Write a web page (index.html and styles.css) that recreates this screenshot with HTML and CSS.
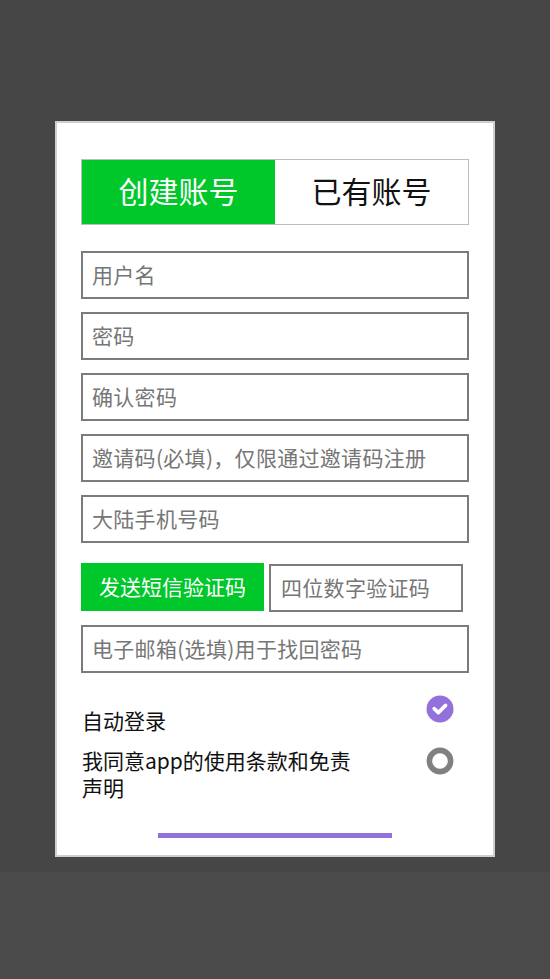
FILE: index.html
```html
<!DOCTYPE html>
<html lang="zh-CN">
<head>
<meta charset="utf-8">
<title>创建账号</title>
<link rel="stylesheet" href="styles.css">
</head>
<body>
<div class="screen">
  <div class="card">
    <div class="tabs">
      <div class="tab tab-active">创建账号</div>
      <div class="tab">已有账号</div>
    </div>
    <div class="field first">用户名</div>
    <div class="field">密码</div>
    <div class="field">确认密码</div>
    <div class="field">邀请码(必填)，仅限通过邀请码注册</div>
    <div class="field">大陆手机号码</div>
    <div class="sms-row">
      <div class="sms-btn">发送短信验证码</div>
      <div class="field code">四位数字验证码</div>
    </div>
    <div class="field email">电子邮箱(选填)用于找回密码</div>
    <div class="check-row row-auto">
      <div class="check-text">自动登录</div>
      <svg class="check-icon" viewBox="0 0 28 28" width="28" height="28">
        <circle cx="14" cy="14" r="13.5" fill="#9470db"/>
        <path d="M8.2 13.6 L12.3 17.6 L19.6 10.4" fill="none" stroke="#ffffff" stroke-width="3.6" stroke-linecap="round" stroke-linejoin="round"/>
      </svg>
    </div>
    <div class="check-row row-agree">
      <div class="check-text agree">我同意app的使用条款和免责声明</div>
      <svg class="check-icon" viewBox="0 0 28 28" width="28" height="28">
        <circle cx="14" cy="14" r="10.6" fill="none" stroke="#808080" stroke-width="5.6"/>
      </svg>
    </div>
    <div class="bar"></div>
  </div>
</div>
<div class="bottom"></div>
</body>
</html>
```

FILE: styles.css
```css
html, body {
  margin: 0;
  padding: 0;
}
body {
  width: 550px;
  height: 979px;
  background: #464646;
  font-family: "Noto Sans CJK SC", "Noto Sans", sans-serif;
  overflow: hidden;
}
.screen {
  height: 872px;
  box-sizing: border-box;
  padding-top: 121px;
  padding-left: 55px;
}
.bottom {
  height: 107px;
  background: #4b4b4b;
}
.card {
  width: 440px;
  box-sizing: border-box;
  background: #ffffff;
  border: 2px solid #cfcfcf;
  padding: 36px 24px 17px 24px;
}
.tabs {
  display: flex;
  height: 66px;
  box-sizing: border-box;
  border: 1px solid #bdbdbd;
}
.tab {
  flex: 1;
  display: flex;
  align-items: center;
  justify-content: center;
  font-size: 30px;
  color: #111111;
  padding-bottom: 4px;
}
.tab-active {
  flex: 0 0 193px;
  background: #00c72a;
  color: #ffffff;
}
.field {
  height: 48px;
  box-sizing: border-box;
  border: 2px solid #7b7b7b;
  margin-top: 13px;
  padding-left: 9px;
  padding-bottom: 3px;
  display: flex;
  align-items: center;
  font-size: 21px;
  color: #767676;
  white-space: nowrap;
  overflow: hidden;
  letter-spacing: 0.3px;
}
.field.first {
  margin-top: 26px;
}
.sms-row {
  display: flex;
  align-items: flex-start;
  margin-top: 20px;
}
.sms-btn {
  width: 183px;
  height: 48px;
  box-sizing: border-box;
  padding-bottom: 3px;
  background: #00c72a;
  color: #ffffff;
  font-size: 21px;
  display: flex;
  align-items: center;
  justify-content: center;
}
.field.code {
  width: 194px;
  margin-top: 1px;
  margin-left: 5px;
  padding-left: 10px;
}
.field.email {
  margin-top: 13px;
}
.check-row {
  display: flex;
  justify-content: space-between;
  align-items: flex-start;
}
.row-auto {
  margin-top: 22px;
}
.row-agree {
  margin-top: 13px;
}
.check-text {
  font-size: 21px;
  line-height: 27px;
  color: #111111;
  padding-left: 1px;
}
.row-auto .check-text {
  margin-top: 12px;
}
.agree {
  width: 282px;
}
.check-icon {
  display: block;
  margin-right: 15px;
}
.bar {
  width: 234px;
  height: 5px;
  background: #9470db;
  margin: 32px auto 0 auto;
}
```
